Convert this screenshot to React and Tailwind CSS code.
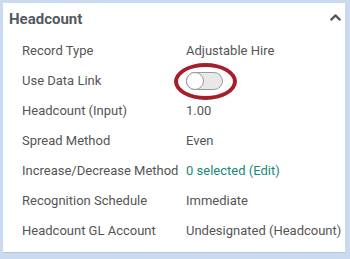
import { ChevronUp } from 'lucide-react'

const rows = [
  ['Record Type','Adjustable Hire'],
  ['Use Data Link',null],
  ['Headcount (Input)','1.00'],
  ['Spread Method','Even'],
  ['Increase/Decrease Method','0 selected (Edit)'],
  ['Recognition Schedule','Immediate'],
  ['Headcount GL Account','Undesignated (Headcount)'],
]

function Toggle() {
  return (
    <div className="relative w-[37px] h-[18px]">
      <div className="absolute left-[-12px] top-[-9px] w-[63px] h-[37px] rounded-[50%] border-[4px] border-[#a51f2b]"/>
      <div className="w-[37px] h-[18px] rounded-full bg-[#e8e8e8] border border-[#9a9a9a] relative">
        <div className="absolute left-[-1px] top-[-1px] w-[18px] h-[18px] rounded-full bg-white border border-[#9a9a9a]"/>
      </div>
    </div>
  )
}

export default function App() {
  return (
    <div className="w-[350px] h-[259px] bg-[#c9daf1] p-[3px] pr-[5px] pb-[6px]" style={{fontFamily:'Roboto, sans-serif'}}>
      <div className="bg-white h-full border-b border-[#b9c4d2]">
        <div className="flex items-center justify-between pl-[6px] pr-[1px] h-[33px]">
          <h2 className="text-[15px] font-bold text-[#555a62]">Headcount</h2>
          <ChevronUp size={17} strokeWidth={3} className="text-[#555] mb-[4px]"/>
        </div>
        <div className="pl-[19px]">
          {rows.map(([l,v])=>(
            <div key={l} className="flex items-center h-[30px] text-[13px] text-[#555]">
              <div className="w-[164px]">{l}</div>
              {v===null ? <Toggle/> : <div className={v.startsWith('0 sel')?'text-[#168a76]':''}>{v}</div>}
            </div>
          ))}
        </div>
      </div>
    </div>
  )
}
